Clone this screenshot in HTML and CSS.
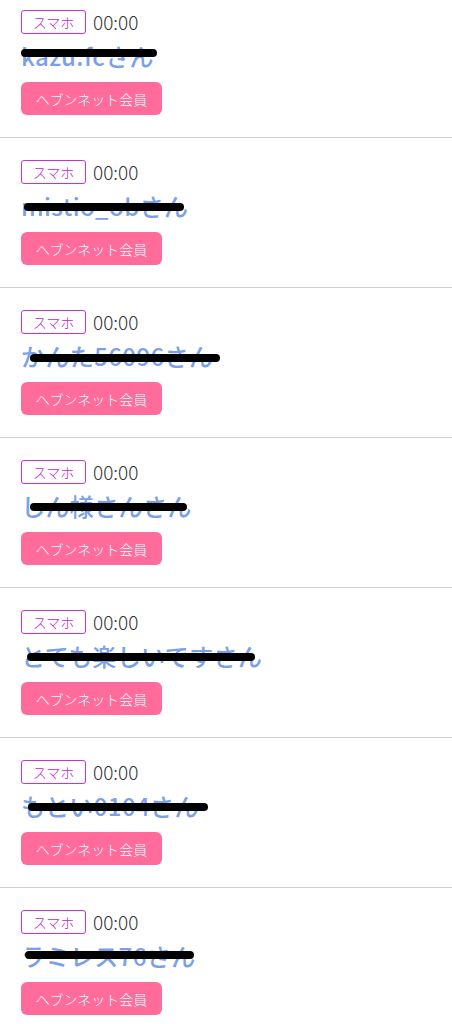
FILE: index.html
```html
<!DOCTYPE html>
<html lang="ja">
<head>
<meta charset="utf-8">
<title>ヘブンネット会員</title>
<link rel="stylesheet" href="styles.css">
</head>
<body>
<ul class="list">
  <li class="item">
    <div class="meta"><span class="badge">スマホ</span><span class="time">00:00</span></div>
    <div class="name">kazu.fcさん<span class="strike s1"></span></div>
    <span class="member">ヘブンネット会員</span>
  </li>
  <li class="item">
    <div class="meta"><span class="badge">スマホ</span><span class="time">00:00</span></div>
    <div class="name">mistio_obさん<span class="strike s2"></span></div>
    <span class="member">ヘブンネット会員</span>
  </li>
  <li class="item">
    <div class="meta"><span class="badge">スマホ</span><span class="time">00:00</span></div>
    <div class="name">かんた56096さん<span class="strike s3"></span></div>
    <span class="member">ヘブンネット会員</span>
  </li>
  <li class="item">
    <div class="meta"><span class="badge">スマホ</span><span class="time">00:00</span></div>
    <div class="name">しん様さんさん<span class="strike s4"></span></div>
    <span class="member">ヘブンネット会員</span>
  </li>
  <li class="item">
    <div class="meta"><span class="badge">スマホ</span><span class="time">00:00</span></div>
    <div class="name">とても楽しいですさん<span class="strike s5"></span></div>
    <span class="member">ヘブンネット会員</span>
  </li>
  <li class="item">
    <div class="meta"><span class="badge">スマホ</span><span class="time">00:00</span></div>
    <div class="name">もとい0104さん<span class="strike s6"></span></div>
    <span class="member">ヘブンネット会員</span>
  </li>
  <li class="item">
    <div class="meta"><span class="badge">スマホ</span><span class="time">00:00</span></div>
    <div class="name">ラミレス76さん<span class="strike s7"></span></div>
    <span class="member">ヘブンネット会員</span>
  </li>
</ul>
</body>
</html>
```
FILE: styles.css
```css
html, body {
  margin: 0;
  padding: 0;
  background: #ffffff;
  font-family: "Noto Sans CJK JP", "Noto Sans", sans-serif;
}

.list {
  list-style: none;
  margin: 0;
  padding: 0;
}

.item {
  display: flex;
  flex-direction: column;
  align-items: flex-start;
  padding: 22px 21px 22px;
  border-bottom: 1px solid #cfcfcf;
}

.item:first-child {
  padding-top: 10px;
}

.meta {
  display: flex;
  align-items: center;
  gap: 7px;
  height: 24px;
}

.badge {
  box-sizing: border-box;
  display: inline-flex;
  align-items: center;
  justify-content: center;
  height: 24px;
  width: 65px;
  border: 1px solid #c92fd8;
  border-radius: 3px;
  color: #c21dd2;
  font-size: 14px;
  font-weight: 300;
  line-height: 1;
}

.time {
  color: #333333;
  font-size: 19px;
  font-weight: 300;
  line-height: 24px;
}

.name {
  position: relative;
  margin: 8px 0;
  height: 32px;
  line-height: 28px;
  font-size: 24px;
  font-weight: 500;
  letter-spacing: 0.4px;
  color: #7ba0ea;
  white-space: nowrap;
}

.strike {
  position: absolute;
  height: 8px;
  border-radius: 4px;
  background: #000000;
}

.s1 { left: 0; width: 136px; top: 7px; }
.s2 { left: 3px; width: 160px; top: 11px; }
.s3 { left: 9px; width: 190px; top: 12px; }
.s4 { left: 9px; width: 157px; top: 11px; }
.s5 { left: 6px; width: 228px; top: 11px; }
.s6 { left: 7px; width: 180px; top: 11px; }
.s7 { left: 4px; width: 169px; top: 9px; }

.member {
  box-sizing: border-box;
  display: inline-flex;
  align-items: center;
  justify-content: center;
  width: 141px;
  height: 33px;
  border-radius: 6px;
  background: #ff6b9b;
  color: #ffffff;
  font-size: 14px;
  font-weight: 300;
  line-height: 1;
}
```
